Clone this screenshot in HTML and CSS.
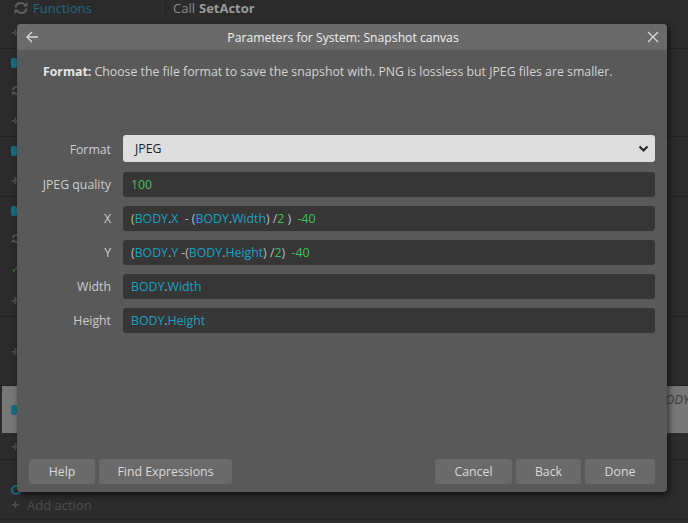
FILE: index.html
```html
<!DOCTYPE html>
<html>
<head>
  <meta charset="utf-8">
  <link rel="stylesheet" href="styles.css">
</head>
<body>
  <div class="sheet">
    <div class="row row-top">
      <div class="top-bar">
        <div class="top-cell fn">
          <svg class="swap-ico" width="16" height="14" viewBox="0 0 16 14"><path d="M2.5 6.5C3 3.5 5.5 2 8 2c2 0 3.5 1 4.5 2.3M13.5 7.5C13 10.5 10.5 12 8 12c-2 0-3.5-1-4.5-2.3" fill="none" stroke="#606060" stroke-width="2"/><path d="M14.5 1v4.5H10zM1.5 13V8.5H6z" fill="#606060"/></svg>
          <span class="fn-text">Functions</span>
        </div>
        <div class="top-cell call">Call <b>SetActor</b></div>
      </div>
      <div class="side"><span class="plus">+</span></div>
    </div>
    <div class="row r2">
      <div class="side"><span class="dot teal"></span><svg class="side-ico" width="12" height="11" viewBox="0 0 16 14"><path d="M2.5 6.5C3 3.5 5.5 2 8 2c2 0 3.5 1 4.5 2.3M13.5 7.5C13 10.5 10.5 12 8 12c-2 0-3.5-1-4.5-2.3" fill="none" stroke="#5a5a5a" stroke-width="2.2"/><path d="M14.5 1v4.5H10zM1.5 13V8.5H6z" fill="#5a5a5a"/></svg><span class="plus">+</span></div>
    </div>
    <div class="row r3">
      <div class="side"><span class="dot teal"></span><span class="plus">+</span></div>
    </div>
    <div class="row r4">
      <div class="side"><span class="dot teal"></span><svg class="side-ico" width="12" height="11" viewBox="0 0 16 14"><path d="M2.5 6.5C3 3.5 5.5 2 8 2c2 0 3.5 1 4.5 2.3M13.5 7.5C13 10.5 10.5 12 8 12c-2 0-3.5-1-4.5-2.3" fill="none" stroke="#5a5a5a" stroke-width="2.2"/><path d="M14.5 1v4.5H10zM1.5 13V8.5H6z" fill="#5a5a5a"/></svg><span class="tick">&#10003;</span><span class="plus">+</span></div>
    </div>
    <div class="row r5">
      <div class="side"><span class="plus">+</span></div>
    </div>
    <div class="row r6 hl">
      <div class="side"><span class="dot teal"></span></div>
      <div class="hl-clip"><span class="hl-text">ODY</span></div>
    </div>
    <div class="row r7">
      <div class="side"><span class="plus">+</span></div>
    </div>
    <div class="row r8">
      <div class="side"><span class="dot ring"></span></div>
      <div class="add"><span class="plus">+</span> Add action</div>
    </div>
  </div>

  <div class="dialog">
    <div class="dialog-head">
      <svg class="back-ico" width="14" height="14" viewBox="0 0 14 14"><path d="M13 7H2M7 2L2 7l5 5" fill="none" stroke="#d6d6d6" stroke-width="1.4"/></svg>
      <div class="dialog-title">Parameters for System: Snapshot canvas</div>
      <svg class="close-ico" width="12" height="12" viewBox="0 0 12 12"><path d="M1 1l10 10M11 1L1 11" fill="none" stroke="#d6d6d6" stroke-width="1.3"/></svg>
    </div>
    <div class="dialog-body">
      <p class="desc"><b>Format:</b> Choose the file format to save the snapshot with. PNG is lossless but JPEG files are smaller.</p>
      <div class="params">
        <label class="plabel">Format</label>
        <div class="select">
          <span>JPEG</span>
          <svg width="11" height="8" viewBox="0 0 11 8"><path d="M1.5 1.5l4 4 4-4" fill="none" stroke="#2a2a2a" stroke-width="2.2"/></svg>
        </div>
        <label class="plabel">JPEG quality</label>
        <div class="expr"><span class="num">100</span></div>
        <label class="plabel">X</label>
        <div class="expr"><span class="op">(</span><span class="obj">BODY</span><span class="op">.</span><span class="obj">X</span>  <span class="op">- (</span><span class="obj">BODY</span><span class="op">.</span><span class="obj">Width</span><span class="op">) /</span><span class="num">2</span><span class="op"> )</span>  <span class="num">-40</span></div>
        <label class="plabel">Y</label>
        <div class="expr"><span class="op">(</span><span class="obj">BODY</span><span class="op">.</span><span class="obj">Y</span> <span class="op">-(</span><span class="obj">BODY</span><span class="op">.</span><span class="obj">Height</span><span class="op">) /</span><span class="num">2</span><span class="op">)</span>  <span class="num">-40</span></div>
        <label class="plabel">Width</label>
        <div class="expr"><span class="obj">BODY</span><span class="op">.</span><span class="obj">Width</span></div>
        <label class="plabel">Height</label>
        <div class="expr"><span class="obj">BODY</span><span class="op">.</span><span class="obj">Height</span></div>
      </div>
    </div>
    <div class="dialog-foot">
      <div class="btn-group">
        <button class="btn btn-help">Help</button>
        <button class="btn btn-find">Find Expressions</button>
      </div>
      <div class="btn-group">
        <button class="btn btn-cancel">Cancel</button>
        <button class="btn btn-back">Back</button>
        <button class="btn btn-done">Done</button>
      </div>
    </div>
  </div>
</body>
</html>
```

FILE: styles.css
```css
html, body {
  margin: 0;
  height: 100%;
}
body {
  background: #2b2b2b;
  font-family: "Open Sans", "Noto Sans", sans-serif;
  color: #d2d2d2;
  overflow: hidden;
  position: relative;
}
.sheet {
  display: flex;
  flex-direction: column;
  border-bottom: 1px solid #232323;
  height: 520px;
  box-sizing: border-box;
}
.row {
  position: relative;
  border-bottom: 1px solid #222;
  box-sizing: border-box;
}
.row-top { height: 49px; }
.r2 { height: 88px; }
.r3 { height: 60px; }
.r4 { height: 120px; }
.r5 { height: 69px; }
.r6 { height: 47px; border-bottom: none; }
.r7 { height: 27px; }
.r8 { flex: 1; border-bottom: none; }
.hl {
  background: #777;
  margin-left: 2px;
}
.hl-clip {
  position: absolute;
  right: 0;
  top: 0;
  width: 21px;
  height: 100%;
  overflow: hidden;
}
.hl-text {
  position: absolute;
  left: -2px;
  top: 4px;
  font-style: italic;
  font-size: 13px;
  color: #3a3d42;
}
.top-bar {
  display: flex;
  height: 15px;
  align-items: center;
  font-size: 13px;
}
.top-cell {
  display: flex;
  align-items: center;
  height: 15px;
}
.fn {
  width: 163px;
  border-right: 1px solid #333;
  padding-left: 13px;
  box-sizing: border-box;
  gap: 4px;
}
.swap-ico { flex: none; }
.fn-text { color: #1e6a80; }
.call {
  padding-left: 10px;
  color: #8a8a8a;
  gap: 4px;
}
.call b { color: #9a9a9a; }
.side {
  display: flex;
  flex-direction: column;
  justify-content: space-around;
  align-items: flex-start;
  width: 17px;
  padding-left: 11px;
  height: 100%;
  box-sizing: border-box;
}
.row-top .side {
  height: 34px;
}
.hl .side { padding-left: 9px; }
.side-ico { flex: none; }
.plus {
  color: #4e4e4e;
  font-size: 15px;
  line-height: 1;
  font-weight: bold;
}
.dot {
  width: 6px;
  height: 10px;
  border-radius: 2px;
}
.teal { background: #176c80; }
.ring {
  width: 10px;
  height: 10px;
  border-radius: 50%;
  border: 2px solid #176c80;
  box-sizing: border-box;
}
.tick { color: #2f7a36; font-size: 11px; }
.add {
  position: absolute;
  left: 11px;
  top: 36px;
  font-size: 13px;
  color: #4d4d4d;
}
.add .plus { margin-right: 4px; }

.dialog {
  position: absolute;
  left: 17px;
  top: 24px;
  width: 650px;
  height: 468px;
  background: #595959;
  border-radius: 4px;
  box-shadow: 2px 3px 6px rgba(0, 0, 0, 0.55);
  display: flex;
  flex-direction: column;
  overflow: hidden;
}
.dialog-head {
  height: 26px;
  background: #6a6a6a;
  display: flex;
  align-items: center;
  padding: 0 8px 0 8px;
}
.back-ico { flex: none; }
.close-ico { flex: none; }
.dialog-title {
  flex: 1;
  text-align: center;
  font-size: 12.2px;
  color: #f0f0f0;
}
.dialog-body {
  flex: 1;
  padding: 0 12px 0 0;
}
.desc {
  margin: 13px 0 0 26px;
  font-size: 12.3px;
  color: #d4d4d4;
}
.desc b { color: #e6e6e6; }
.params {
  display: grid;
  grid-template-columns: 94px 1fr;
  column-gap: 12px;
  row-gap: 9px;
  margin-top: 55px;
  align-items: center;
}
.plabel {
  text-align: right;
  font-size: 12.3px;
  color: #cdcdcd;
}
.select {
  height: 27px;
  background: #dedede;
  border-radius: 3px;
  display: flex;
  align-items: center;
  justify-content: space-between;
  padding: 0 6px 0 12px;
  font-size: 12.3px;
  color: #222;
  margin-bottom: 1px;
}
.expr {
  height: 25px;
  line-height: 25px;
  background: #363636;
  border-radius: 3px;
  padding: 0 8px;
  font-size: 12.3px;
  white-space: pre;
}
.obj { color: #1aa2c2; }
.op { color: #bdbdbd; }
.num { color: #3ec25c; }
.dialog-foot {
  display: flex;
  justify-content: space-between;
  padding: 0 12px 8px 12px;
}
.btn-group {
  display: flex;
  gap: 4px;
}
.btn {
  height: 25px;
  border: none;
  border-radius: 3px;
  background: #6a6a6a;
  color: #dadada;
  font-family: inherit;
  font-size: 12.3px;
  padding: 0;
}
.btn-help { width: 66px; }
.btn-find { width: 133px; }
.btn-cancel { width: 77px; }
.btn-back { width: 65px; }
.btn-done { width: 70px; }
```
